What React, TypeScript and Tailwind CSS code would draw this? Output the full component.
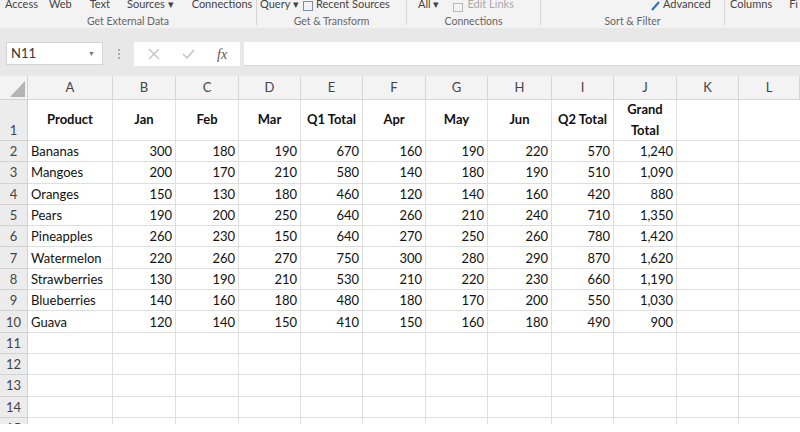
import React from 'react';

const cols = ['A', 'B', 'C', 'D', 'E', 'F', 'G', 'H', 'I', 'J', 'K', 'L'];

const headers = ['Product', 'Jan', 'Feb', 'Mar', 'Q1 Total', 'Apr', 'May', 'Jun', 'Q2 Total'];

const rows: [string, ...string[]][] = [
  ['Bananas', '300', '180', '190', '670', '160', '190', '220', '570', '1,240'],
  ['Mangoes', '200', '170', '210', '580', '140', '180', '190', '510', '1,090'],
  ['Oranges', '150', '130', '180', '460', '120', '140', '160', '420', '880'],
  ['Pears', '190', '200', '250', '640', '260', '210', '240', '710', '1,350'],
  ['Pineapples', '260', '230', '150', '640', '270', '250', '260', '780', '1,420'],
  ['Watermelon', '220', '260', '270', '750', '300', '280', '290', '870', '1,620'],
  ['Strawberries', '130', '190', '210', '530', '210', '220', '230', '660', '1,190'],
  ['Blueberries', '140', '160', '180', '480', '180', '170', '200', '550', '1,030'],
  ['Guava', '120', '140', '150', '410', '150', '160', '180', '490', '900'],
];

// row header + A..L
const gridCols =
  'grid grid-cols-[28px_85px_63px_63px_62px_62px_63px_62px_64px_62px_63px_62px_1fr]';

const cell = 'border-r border-b border-[#dedede]';
const rowHead =
  'border-r border-b border-[#d2d2d2] bg-[#ececec] text-[#444] flex justify-center';

const RibbonGroup: React.FC<{ label: string; className: string; children: React.ReactNode }> = ({
  label,
  className,
  children,
}) => (
  <div className={`flex flex-col border-r border-[#d6d6d6] h-[25px] ${className}`}>
    <div className="flex items-end h-[8px] text-[11px] text-[#444] whitespace-nowrap leading-none">
      {children}
    </div>
    <div className="text-center text-[10.5px] text-[#666] mt-[8px] leading-none whitespace-nowrap">{label}</div>
  </div>
);

const Ribbon = () => (
  <div className="h-[28px] bg-[#f3f3f3] flex overflow-hidden">
    <RibbonGroup label="Get External Data" className="w-[257px]">
      <div className="flex -mb-[1px]">
        <span className="ml-[5px]">Access</span>
        <span className="ml-[11px]">Web</span>
        <span className="ml-[18px]">Text</span>
        <span className="ml-[17px]">Sources ▾</span>
        <span className="ml-[18px]">Connections</span>
      </div>
    </RibbonGroup>
    <RibbonGroup label="Get & Transform" className="w-[150px]">
      <div className="flex items-end -mb-[1px]">
        <span className="ml-[3px]">Query ▾</span>
        <span className="ml-[4px] w-[10px] h-[10px] border border-[#7a8fb0] mb-[-2px]" />
        <span className="ml-[3px]">Recent Sources</span>
      </div>
    </RibbonGroup>
    <RibbonGroup label="Connections" className="w-[134px]">
      <div className="flex items-end -mb-[1px]">
        <span className="ml-[11px]">All ▾</span>
        <span className="ml-[14px] w-[10px] h-[9px] border border-[#b8b8b8] mb-[-3px]" />
        <span className="ml-[4px] text-[#aaa]">Edit Links</span>
      </div>
    </RibbonGroup>
    <RibbonGroup label="Sort & Filter" className="w-[184px]">
      <div className="flex items-end -mb-[1px]">
        <svg width="10" height="10" viewBox="0 0 10 10" className="ml-[110px] mb-[-2px]">
          <path d="M1 9 L8 1" stroke="#2f6fb7" strokeWidth="2" />
        </svg>
        <span className="ml-[2px]">Advanced</span>
      </div>
    </RibbonGroup>
    <div className="flex items-end h-[8px] text-[11px] text-[#444] whitespace-nowrap leading-none">
      <div className="flex -mb-[1px]">
        <span className="ml-[5px]">Columns</span>
        <span className="ml-[17px]">Fi</span>
      </div>
    </div>
  </div>
);

const FormulaBar = () => (
  <div className="bg-[#e8e8e8] h-[48px] flex items-start pt-[14px] pl-[6px]">
    <div className="w-[97px] h-[23px] bg-white border border-[#d4d4d4] flex items-center justify-between px-[4px]">
      <span className="text-[13px] text-[#333]">N11</span>
      <span className="text-[7px] text-[#777] mr-[3px]">▼</span>
    </div>
    <div className="w-[31px] h-[23px] flex flex-col items-center justify-center gap-[2px]">
      <span className="w-[2px] h-[2px] bg-[#aaa]" />
      <span className="w-[2px] h-[2px] bg-[#aaa]" />
      <span className="w-[2px] h-[2px] bg-[#aaa]" />
    </div>
    <div className="w-[106px] h-[24px] bg-white flex items-center">
      <svg width="12" height="12" viewBox="0 0 12 12" className="ml-[14px]">
        <path d="M1 1 L11 11 M11 1 L1 11" stroke="#c2c2c2" strokeWidth="1.3" />
      </svg>
      <svg width="13" height="12" viewBox="0 0 13 12" className="ml-[22px]">
        <path d="M1 6 L5 10 L12 2" stroke="#c2c2c2" strokeWidth="1.4" fill="none" />
      </svg>
      <span className="ml-[22px] text-[14px] italic text-[#555] font-['Liberation_Serif',serif]">fx</span>
    </div>
    <div className="ml-[4px] flex-1 h-[24px] bg-white border-b border-[#d8d8d8]" />
  </div>
);

const Sheet = () => (
  <div className="h-[348px] overflow-hidden bg-white">
    <div className={`${gridCols} grid-rows-[24px_41px] text-[13px] text-[#111]`}>
      {/* column headers */}
      <div className="bg-[#f3f3f3] border-r border-b border-[#d2d2d2] flex items-end justify-end pr-[2px] pb-[2px]">
        <svg width="15" height="16" viewBox="0 0 15 16">
          <path d="M15 0 L15 16 L0 16 Z" fill="#b4b4b4" />
        </svg>
      </div>
      {cols.map((c) => (
        <div
          key={c}
          className="bg-[#f3f3f3] border-r border-b border-[#d6d6d6] flex items-center justify-center text-[#444]"
        >
          {c}
        </div>
      ))}

      {/* row 1 */}
      <div className={`${rowHead} items-end pb-0`}>1</div>
      {headers.map((h) => (
        <div key={h} className={`${cell} flex items-center justify-center font-bold`}>
          {h}
        </div>
      ))}
      <div className={`${cell} flex flex-col items-center justify-center font-bold leading-[21px]`}>
        <span>Grand</span>
        <span>Total</span>
      </div>
      <div className={cell} />
      <div className="border-b border-[#dedede]" />
    </div>

    <div className={`${gridCols} auto-rows-[21.3px] text-[13px] text-[#111] leading-none`}>
      {Array.from({ length: 14 }, (_, i) => {
        const n = i + 2;
        const r = rows[i];
        return (
          <React.Fragment key={n}>
            <div className={`${rowHead} items-center pt-[1px]`}>{n}</div>
            <div className={`${cell} flex items-center pl-[3px] pt-[1px]`}>{r ? r[0] : ''}</div>
            {Array.from({ length: 9 }, (_, j) => (
              <div key={j} className={`${cell} flex items-center justify-end pr-[3px] pt-[1px]`}>
                {r ? r[j + 1] : ''}
              </div>
            ))}
            <div className={cell} />
            <div className="border-b border-[#dedede]" />
          </React.Fragment>
        );
      })}
    </div>
  </div>
);

export default function App() {
  return (
    <div className="w-[800px] h-[432px] overflow-hidden bg-white font-['Lato','Liberation_Sans',sans-serif]">
      <Ribbon />
      <FormulaBar />
      <Sheet />
    </div>
  );
}
